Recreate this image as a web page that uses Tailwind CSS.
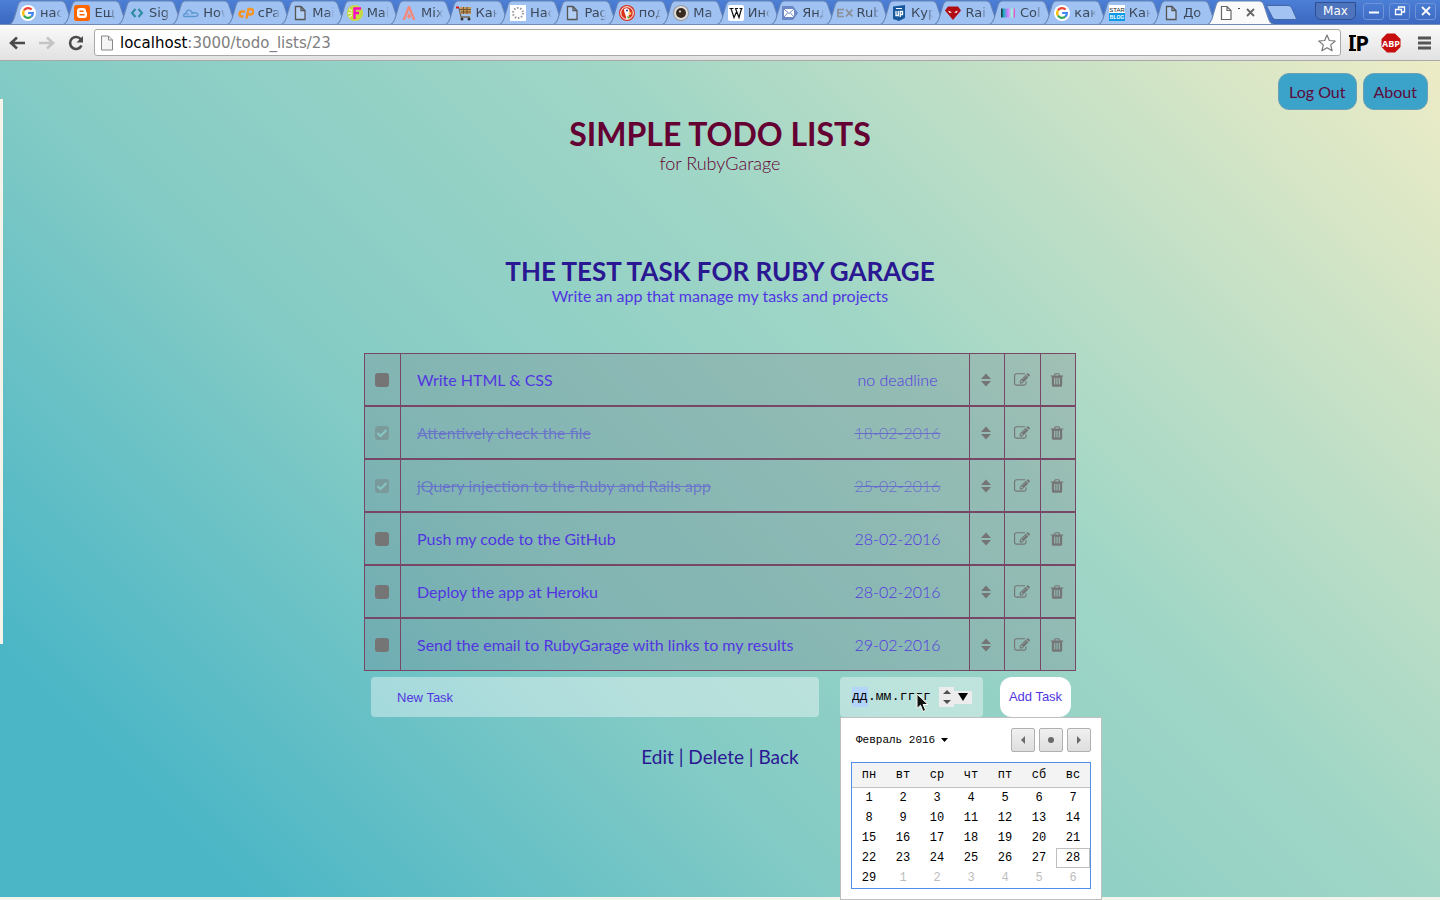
<!DOCTYPE html>
<html lang="ru">
<head>
<meta charset="utf-8">
<title>Todo list</title>
<script src="https://cdn.jsdelivr.net/npm/@tailwindcss/browser@4"></script>
</head>
<body class="flex min-h-screen flex-col overflow-x-hidden bg-[#f4f3ec] font-['Lato',sans-serif]">

<svg class="absolute size-0" aria-hidden="true">
  <symbol id="g" viewBox="0 0 16 16"><circle cx="8" cy="8" r="8" fill="#fff"/><g fill="none" stroke-width="2.2"><path d="M4 5.3A4.8 4.8 0 0 1 11.6 4.6" stroke="#ea4335"/><path d="M4 5.3a4.9 4.9 0 0 0 0 5.4" stroke="#fbbc05"/><path d="M4 10.7a4.8 4.8 0 0 0 7.2 1" stroke="#34a853"/><path d="M11.2 11.7A4.8 4.8 0 0 0 12.9 8H8.2" stroke="#4285f4"/></g></symbol>
  <symbol id="blogger" viewBox="0 0 16 16"><rect width="16" height="16" rx="2.5" fill="#f60"/><path d="M6 3h3a3 3 0 0 1 3 3v.7c0 .6 1 .3 1 1.3V10a3 3 0 0 1-3 3H6a3 3 0 0 1-3-3V6a3 3 0 0 1 3-3z" fill="#fff"/><path d="M6 6.2h3M6 9.8h4" stroke="#f60" stroke-width="1.5" stroke-linecap="round"/></symbol>
  <symbol id="angles" viewBox="0 0 16 16"><path d="M6.5 4 3 8l3.5 4M9.500 4 13 8l-3.500 4" fill="none" stroke="#2d8a9e" stroke-width="2"/></symbol>
  <symbol id="cloud" viewBox="0 0 16 16"><path d="M1 11.5c-1-2 .5-3 2-3 0-3 3-4.500 5-2.500 1 .5 1 1.500 1 2.500 2-1.500 6-.5 6 1s-2 2-4 2zM3 8.500l3 1" fill="none" stroke="#5b97cf" stroke-width="1.3"/></symbol>
  <symbol id="cp" viewBox="0 0 16 16"><g fill="none" stroke="#f7931e" stroke-width="2.4"><path d="M7 6.500H4a2.500 2.500 0 0 0 0 5H5.500"/><path d="M8.500 13.500 10.500 4H12.500a2.300 2.300 0 0 1 0 5.500h-2"/></g></symbol>
  <symbol id="page" viewBox="0 0 16 16"><path d="M3.500 1.500h5.500l4 4v9H3.500zM9 1.500v4h4" fill="#b4cff5" stroke="#555" stroke-width="1.3"/></symbol>
  <symbol id="pageWhite" viewBox="0 0 16 16"><path d="M3.500 1.500h5.500l4 4v9H3.500zM9 1.500v4h4" fill="#fff" stroke="#666" stroke-width="1.2"/></symbol>
  <symbol id="f" viewBox="0 0 16 16"><circle cx="8" cy="8" r="8" fill="#c6d93e"/><path d="M2 4l3 2M1 8h4M2 12l3-2" stroke="#fff"/><path d="M7.500 14V3.500H14M7.500 8H12" fill="none" stroke="#f0c" stroke-width="2.3"/></symbol>
  <symbol id="mix" viewBox="0 0 16 16"><path d="M7 1h2l5.500 14H12L8 5 4 15H1.500z" fill="#f4897b"/><path d="M8 8l2 3.500-2 2.500-2-2.500z" fill="#f4897b"/></symbol>
  <symbol id="cart" viewBox="0 0 16 16"><path d="M0 2.500h3" stroke="#d11" stroke-width="2"/><path d="M3 3l2 9h9" fill="none" stroke="#765" stroke-width="1.3"/><path d="M4 2h11v7H5z" fill="#c39a5b"/><path d="M4 4.500h11M5 7h10M7.500 2v7M11 2v7" stroke="#76542c"/><circle cx="6" cy="14" r="1.500" fill="#333"/><circle cx="13" cy="14" r="1.500" fill="#333"/></symbol>
  <symbol id="dots" viewBox="0 0 16 16"><path fill="#fff" d="M0 0h16v16H0z"/><circle cx="8" cy="8" r="5" fill="none" stroke="#999" stroke-width="2" stroke-dasharray="1.5 1.64"/></symbol>
  <symbol id="duck" viewBox="0 0 16 16"><circle cx="8" cy="8" r="8" fill="#d9321c"/><circle cx="8" cy="8" r="6.300" fill="none" stroke="#fff"/><path d="M5 4c3-2 6 0 5.500 3l2 2-3 1 1 4H7.500C7 10 5 8 5 4z" fill="#fff"/><path d="M9 7.500h4L10 9.500z" fill="#fc2"/><circle cx="8" cy="5.500" r="1" fill="#248"/><path d="M8 11l3 1-2 2z" fill="#5a3"/></symbol>
  <symbol id="eye" viewBox="0 0 16 16"><circle cx="8" cy="8" r="8" fill="#999"/><circle cx="8" cy="8" r="7" fill="#ddd"/><circle cx="8" cy="8" r="5" fill="#3a2b20"/><circle cx="7" cy="6.500" r="1" fill="#eee"/></symbol>
  <symbol id="w" viewBox="0 0 16 16"><rect width="16" height="16" rx="2" fill="#fff"/><path d="M1.500 3.500h4M7 3.500h3M11.500 3.500h3M3 3.500l3 9L8.500 7M7.500 3.500l3.500 9 2.500-9" fill="none" stroke="#111" stroke-width="1.2"/></symbol>
  <symbol id="mail" viewBox="0 0 16 16"><path d="M0 1h11l5 7-5 7H0z" fill="#6c88c4"/><path d="M2 4h10v8H2z" fill="#fff"/><path d="M2 4l5 4.500L12 4M2 12l3.500-4M12 12 8.500 8" fill="none" stroke="#6c88c4"/></symbol>
  <symbol id="ex" viewBox="0 0 16 16"><path d="M7 4.500H1v7h6M1 8h5M9 4.500l6.500 7M15.500 4.500 9 11.500" fill="none" stroke="#8a8f98" stroke-width="1.7"/></symbol>
  <symbol id="up" viewBox="0 0 16 16"><path d="M2 1.500 14 0v13l-6 3-6-2z" fill="#17589c"/><path d="M5 3.500h6" stroke="#fff"/><path d="M5 6v4.500h2.300V6M9.200 12V6.500h2.300v3H9.200" fill="none" stroke="#fff" stroke-width="1.3"/></symbol>
  <symbol id="ruby" viewBox="0 0 16 16"><path d="M3 1.500h10l3 4-8 9.500L0 5.500z" fill="#b00c12"/><path d="M3 5.500l4 1.700-2.500.8zM13 5.500l-4 1.700 2.500.8z" fill="#fff"/></symbol>
  <symbol id="color" viewBox="0 0 16 16"><path d="M1 3.500h14v9H1z" fill="url(#cg)"/></symbol>
  <symbol id="star" viewBox="0 0 16 16"><path fill="#fff" d="M0 0h16v8H0z"/><path fill="#0a9ae8" d="M0 8h16v8H0z"/><text x="8" y="6.500" text-anchor="middle" font-family="Liberation Sans" font-size="6" fill="#222">STAR</text><text x="8" y="14.200" text-anchor="middle" font-family="Liberation Sans" font-size="5" font-weight="bold" fill="#fff">BLOG</text></symbol>
  <defs><linearGradient id="cg"><stop stop-color="#222"/><stop offset=".2" stop-color="#19b2c8"/><stop offset=".5" stop-color="#d7f"/><stop offset=".8" stop-color="#9fd"/><stop offset="1" stop-color="#e3c"/></linearGradient></defs>

  <symbol id="sort" viewBox="0 0 10 14"><path d="M5 .5 10 6H0zM5 13.500 10 8H0z" fill="currentColor"/></symbol>
  <symbol id="edit" viewBox="0 0 1792 1792"><path fill="currentColor" d="M888 1184l116-116-152-152-116 116v56h96v96h56zm440-720q-16-16-33 1l-350 350q-17 17-1 33t33-1l350-350q17-17 1-33zm80 594v190q0 119-84.5 203.5t-203.5 84.5h-832q-119 0-203.5-84.5t-84.5-203.5v-832q0-119 84.5-203.5t203.5-84.5h832q63 0 117 25 15 7 18 23 3 17-9 29l-49 49q-14 14-32 8-23-6-45-6h-832q-66 0-113 47t-47 113v832q0 66 47 113t113 47h832q66 0 113-47t47-113v-126q0-13 9-22l64-64q15-15 35-7t20 29zm-96-738l288 288-672 672h-288v-288zm444 132l-92 92-288-288 92-92q28-28 68-28t68 28l152 152q28 28 28 68t-28 68z"/></symbol>
  <symbol id="trash" viewBox="0 0 1792 1792"><path fill="currentColor" d="M704 1376v-704q0-14-9-23t-23-9h-64q-14 0-23 9t-9 23v704q0 14 9 23t23 9h64q14 0 23-9t9-23zm256 0v-704q0-14-9-23t-23-9h-64q-14 0-23 9t-9 23v704q0 14 9 23t23 9h64q14 0 23-9t9-23zm256 0v-704q0-14-9-23t-23-9h-64q-14 0-23 9t-9 23v704q0 14 9 23t23 9h64q14 0 23-9t9-23zm-544-992h448l-48-117q-7-9-17-11h-317q-10 2-17 11zm928 32v64q0 14-9 23t-23 9h-96v948q0 83-47 143.500t-113 60.500h-832q-66 0-113-58.500t-47-141.500v-952h-96q-14 0-23-9t-9-23v-64q0-14 9-23t23-9h309l70-167q15-37 54-63t79-26h320q40 0 79 26t54 63l70 167h309q14 0 23 9t9 23z"/></symbol>
</svg>

<header class="shrink-0 font-['DejaVu_Sans',sans-serif]">
  <div class="flex h-[25px] items-end border-b border-[#6f8db9] bg-linear-to-b from-[#4c7fd6] to-[#3c68c0] pl-[9px]">
    <div id="tabs" role="tablist" class="flex min-w-0 flex-1"></div>
    <button aria-label="New tab" class="ml-1 h-[24px] w-[36px] shrink-0"><svg viewBox="0 0 36 24" class="h-6 w-9"><path d="M2 5.500h21c2 0 3 1 4 3l4 9c.5 1.500 0 2-1.500 2H11c-2 0-3-1-4-3L2 7z" fill="#a3c3f2" stroke="#4167a8"/></svg></button>
    <div class="mb-1 ml-[14px] flex shrink-0 items-center gap-[5px] pr-1 text-white">
      <button class="mr-[2px] h-[18px] w-[41px] rounded-b-md border border-[#2e4f94] bg-[#4e74bd] text-xs leading-4">Max</button>
      <button aria-label="Minimize" class="flex h-[17px] w-[21px] items-center justify-center rounded-[3px] border border-[#6d93d8]"><svg class="size-3" viewBox="0 0 12 12"><path d="M1 7.500h10" stroke="#fff" stroke-width="2"/></svg></button>
      <button aria-label="Restore" class="flex h-[17px] w-[21px] items-center justify-center rounded-[3px] border border-[#6d93d8]"><svg class="size-3" viewBox="0 0 12 12"><path d="M4.500 4V2h6v5H8M1.500 4.500h6v5h-6z" fill="none" stroke="#fff" stroke-width="1.3"/></svg></button>
      <button aria-label="Close window" class="flex h-[17px] w-[21px] items-center justify-center rounded-[3px] border border-[#6d93d8]"><svg class="size-3" viewBox="0 0 12 12"><path d="M2 2l8 8M10 2l-8 8" stroke="#fff" stroke-width="1.8"/></svg></button>
    </div>
  </div>
  <div class="flex h-9 items-center border-b border-[#a9a9a9] bg-linear-to-b from-[#fafafa] to-[#e2e2e2] pr-[7px] pl-2">
    <button aria-label="Back" class="w-[18px]"><svg class="h-4 w-[18px]" viewBox="0 0 18 16"><path d="M3 8h14M9 2.500 3 8l6 5.500" fill="none" stroke="#4a4a4a" stroke-width="2.6"/></svg></button>
    <button aria-label="Forward" class="ml-3 w-[18px]"><svg class="h-4 w-[18px]" viewBox="0 0 18 16"><path d="M1 8h14M9 2.500 15 8l-6 5.500" fill="none" stroke="#c4c4c4" stroke-width="2.6"/></svg></button>
    <button aria-label="Reload" class="ml-3 w-4"><svg class="size-4" viewBox="0 0 16 16"><path d="M13 4.500A6 6 0 1 0 13.500 10.500" fill="none" stroke="#4a4a4a" stroke-width="2.6"/><path d="M15 1v6.500H8.500z" fill="#4a4a4a"/></svg></button>
    <div class="ml-[10px] flex h-[27px] min-w-0 flex-1 items-center rounded-[3px] border border-[#a8a8a8] bg-white pr-1 pl-1">
      <svg class="size-4 shrink-0" viewBox="0 0 16 16"><path d="M2.500 1h7l4 4v10h-11zM9.500 1v4h4" fill="#f4f4f4" stroke="#888"/></svg>
      <span class="ml-[5px] flex-1 text-[15px] leading-5 text-[#808080]" role="textbox" contenteditable="true" aria-label="Address"><span class="text-black">localhost</span>:3000/todo_lists/23</span>
      <svg class="size-[18px] shrink-0" viewBox="0 0 18 18"><path d="M9 1l2.300 5.500 5.900.5-4.500 3.900 1.400 5.900L9 13.700l-5.100 3.100 1.400-5.900L.8 7l5.900-.5z" fill="#fff" stroke="#777" stroke-width="1.2" stroke-linejoin="round"/></svg>
    </div>
    <button class="ml-2 w-5"><svg class="size-5" viewBox="0 0 20 20"><path d="M0 3h7M0 17h7" stroke="#000" stroke-width="2"/><text x="-1" y="18" font-family="Open Sans" font-size="22" font-weight="bold">IP</text></svg></button>
    <button class="ml-3 size-5"><svg class="size-5" viewBox="0 0 20 20"><path d="M6 .5h8l5.500 5.500v8L14 19.500H6L.5 14V6z" fill="#c70d0d"/><text x="10" y="13.500" text-anchor="middle" font-family="Open Sans" font-size="9" font-weight="bold" fill="#fff">ABP</text></svg></button>
    <button aria-label="Menu" class="ml-4 w-4"><svg class="size-4" viewBox="0 0 16 16"><path d="M1 3h13M1 8h13M1 13h13" stroke="#555" stroke-width="2.8"/></svg></button>
  </div>
</header>

<main class="relative mb-[3px] flex flex-1 flex-col items-center bg-[linear-gradient(45deg,#4bb6c6_11%,#84cbc5_37%,#a0d6c6_63%,#edecc6_100%)]">
  <aside class="absolute top-[38px] left-0 h-[545px] w-[3px] bg-[#f6f4ea]" aria-hidden="true"></aside>

  <nav class="flex gap-[6px] self-end pt-3 pr-3 text-base leading-[35px] text-[#5c0a3c]">
    <a href="#" class="rounded-[11px] border border-[#6b9fb4] bg-[#3ba3c9] px-[10px]">Log Out</a>
    <a href="#" class="rounded-[11px] border border-[#6b9fb4] bg-[#3ba3c9] px-[10px]">About</a>
  </nav>

  <h1 class="mt-[7px] text-[32px] leading-[34px] font-bold text-[#640032]">SIMPLE TODO LISTS</h1>
  <p class="mt-[2px] text-lg leading-5 font-light text-[#640032]">for RubyGarage</p>

  <h2 class="mt-[84px] text-[26px] leading-7 font-bold text-[#2a1792]">THE TEST TASK FOR RUBY GARAGE</h2>
  <p class="mt-px text-base leading-5 text-[#5136e0]">Write an app that manage my tasks and projects</p>

  <section class="mt-[47px] w-full max-w-[712px]">
    <table class="w-full table-fixed border-separate border-spacing-0 text-base leading-5 text-[#5136e0]">
      <colgroup><col class="w-9"><col><col class="w-[143px]"><col class="w-[35px]"><col class="w-9"><col class="w-9"></colgroup>
      <tbody id="rows"></tbody>
    </table>

    <form class="mt-[6px] flex pr-[5px] pl-[7px] font-['Liberation_Sans',sans-serif] text-[13px]">
      <input aria-label="New Task" placeholder="New Task" class="h-10 min-w-0 flex-1 rounded-[4px] bg-white/40 px-[26px] pt-px placeholder:text-[#5136e0] placeholder:opacity-100">
      <div class="relative ml-[21px] flex h-10 w-[143px] items-center rounded-[4px] bg-white/40 pl-3">
        <div class="flex w-[87px] font-['Liberation_Mono',monospace] text-black">
          <input aria-label="День" value="дд" class="w-4 bg-[#b3d4fb]"><span>.</span><input aria-label="Месяц" value="мм" class="w-4"><span>.</span><input aria-label="Год" value="гггг" class="w-8">
        </div>
        <button type="button" aria-label="Изменить" class="flex h-5 w-[15px] items-center justify-center bg-[#ececec]"><svg class="h-[14px] w-2" viewBox="0 0 8 14"><path d="M4 0l4 4H0zM4 14l4-4H0z" fill="#505050"/></svg></button>
        <button type="button" aria-label="Календарь" class="flex h-[13px] w-[18px] items-center justify-center bg-[#ececec]"><svg class="h-2 w-[10px]" viewBox="0 0 10 8"><path d="M0 0h10L5 8z"/></svg></button>
        <svg class="absolute top-4 left-[76px] z-20 h-5 w-[14px]" viewBox="0 0 14 20"><path d="M1 1v14.500l3.500-3.200L7 18.500l2.700-1.200-2.600-5.800H12z" fill="#111" stroke="#fff"/></svg>

        <div class="absolute top-10 left-0 z-10 w-[262px] border border-[#bfbfbf] bg-white p-[10px] font-['Liberation_Mono',monospace] text-xs text-black">
          <div class="flex items-center gap-1">
            <button type="button" class="mr-auto flex items-center gap-[6px] pl-[5px] text-[11px]">Февраль 2016 <svg class="h-1 w-[7px]" viewBox="0 0 7 4"><path d="M0 0h7L3.500 4z"/></svg></button>
            <button type="button" aria-label="Предыдущий месяц" class="flex size-6 items-center justify-center rounded-[2px] border border-[#b0b0b0] bg-linear-to-b from-[#f0f0f0] to-[#dedede]"><svg class="h-2 w-1" viewBox="0 0 4 8"><path d="M4 0v8L0 4z" fill="#6a6a6a"/></svg></button>
            <button type="button" aria-label="Сегодня" class="flex size-6 items-center justify-center rounded-[2px] border border-[#b0b0b0] bg-linear-to-b from-[#f0f0f0] to-[#dedede]"><span class="size-[6px] rounded-full bg-[#6a6a6a]"></span></button>
            <button type="button" aria-label="Следующий месяц" class="flex size-6 items-center justify-center rounded-[2px] border border-[#b0b0b0] bg-linear-to-b from-[#f0f0f0] to-[#dedede]"><svg class="h-2 w-1" viewBox="0 0 4 8"><path d="M0 0v8l4-4z" fill="#6a6a6a"/></svg></button>
          </div>
          <table class="mt-[10px] w-full table-fixed border-separate border-spacing-0 border border-[#4f8fe8] text-center leading-[18px]">
            <thead class="bg-[#f3f3f3]"><tr id="days"></tr></thead>
            <tbody id="weeks"></tbody>
          </table>
        </div>
      </div>
      <button type="submit" class="ml-[17px] h-10 w-[71px] rounded-xl bg-white text-[#5136e0]">Add Task</button>
    </form>
  </section>

  <nav class="mt-7 text-[19px] leading-6 text-[#2a1792]"><a href="#">Edit</a> | <a href="#">Delete</a> | <a href="#">Back</a></nav>
</main>

<script>
const tabs = [['g','нас'],['blogger','Ещ'],['angles','Sig'],['cloud','How'],['cp','cPa'],['page','Mai'],['f','Mai'],['mix','Mix'],['cart','Кан'],['dots','Нас'],['page','Pag'],['duck','под'],['eye','Ма'],['w','Инс'],['mail','Янд'],['ex','Rub'],['up','Кур'],['ruby','Rai'],['color','Col'],['g','как'],['star','Кан'],['page','До'],['pageWhite','T']];
document.getElementById('tabs').innerHTML = tabs.map(([icon, text], i) => {
  const on = i === tabs.length - 1;
  return `<button role="tab" aria-selected="${on}" class="relative h-6 min-w-0 flex-1 ${on ? 'z-10' : ''}">
    <svg class="absolute top-0 left-0 h-6 w-[calc(100%+14px)]" viewBox="0 0 68 24" preserveAspectRatio="none"><path d="M0 24.500C3 24 4 21 5 18.500L9 5C10 2 11 1 13 1H52C54 1 55.500 2 56.500 5L61 18.500C62 21.500 63 24 67 24.500" fill="${on ? '#fafafa' : '#a0c2f3'}" stroke="#6583b5"/></svg>
    <span class="relative flex h-6 items-center pt-px pl-[11px]"><svg class="size-4 shrink-0"><use href="#${icon}"/></svg>
    <span class="ml-1 overflow-hidden text-left text-[13px] leading-5 whitespace-nowrap text-[#3c4858] ${on ? 'w-[2px] shrink-0' : 'w-[22px] shrink-0 mask-r-from-70%'}">${text}</span>${on ? '<svg class="ml-[6px] size-[9px] shrink-0" viewBox="0 0 9 9"><path d="M1 1l7 7M8 1L1 8" stroke="#666" stroke-width="1.8"/></svg>' : ''}</span></button>`;
}).join('');

const tasks = [['Write HTML & CSS','no deadline',0],['Attentively check the file','18-02-2016',1],['jQuery injection to the Ruby and Rails app','25-02-2016',1],['Push my code to the GitHub','28-02-2016',0],['Deploy the app at Heroku','28-02-2016',0],['Send the email to RubyGarage with links to my results','29-02-2016',0]];
document.getElementById('rows').innerHTML = tasks.map(([name, date, done], i) => `
  <tr class="h-[53px] bg-[#746f80]/25 text-[#757575]">
    <td class="border-y border-l border-[#784766] py-0 pr-px pl-0"><span class="relative mx-auto block size-[14px] ${done ? 'opacity-40' : ''}"><input id="t${i}" type="checkbox" ${done ? 'checked' : ''} class="block size-[14px] appearance-none rounded-[3px] bg-[#757575]">${done ? '<svg class="pointer-events-none absolute inset-0 size-[14px]" viewBox="0 0 14 14"><path d="M2.500 7l3 3 6-6" fill="none" stroke="#8fe4e0" stroke-width="2.2"/></svg>' : ''}</span></td>
    <td class="border-y border-l border-[#784766] py-0 pl-4 text-[#5136e0]"><label for="t${i}" class="${done ? 'line-through opacity-50' : ''}">${name.replace('&','&amp;')}</label></td>
    <td class="border-y border-[#784766] p-0 text-center font-light text-[#5136e0]"><span class="${done ? 'line-through opacity-60' : ''}">${date}</span></td>
    <td class="border-y border-l border-[#784766] py-0 pr-[2px] pl-0"><button aria-label="Move" class="mx-auto block"><svg class="h-[14px] w-[10px]"><use href="#sort"/></svg></button></td>
    <td class="border-y border-l border-[#784766] py-0 pr-px pl-0"><button aria-label="Edit" class="mx-auto block"><svg class="size-4"><use href="#edit"/></svg></button></td>
    <td class="border-x border-y border-[#784766] py-0 pr-[2px] pl-0"><button aria-label="Delete" class="mx-auto block"><svg class="size-4"><use href="#trash"/></svg></button></td>
  </tr>`).join('');

document.getElementById('days').innerHTML = ['пн','вт','ср','чт','пт','сб','вс'].map(d => `<th class="h-[25px] border-b border-[#bfbfbf] p-0 font-normal">${d}</th>`).join('');
document.getElementById('weeks').innerHTML = [0,1,2,3,4].map(w => '<tr>' + [1,2,3,4,5,6,7].map(d => {
  const n = w * 7 + d;
  return `<td class="h-5 border p-0 ${n === 28 ? 'border-[#bfbfbf]' : 'border-transparent'} ${n > 29 ? 'text-[#bdbdbd]' : ''}">${n > 29 ? n - 29 : n}</td>`;
}).join('') + '</tr>').join('');
</script>
</body>
</html>
